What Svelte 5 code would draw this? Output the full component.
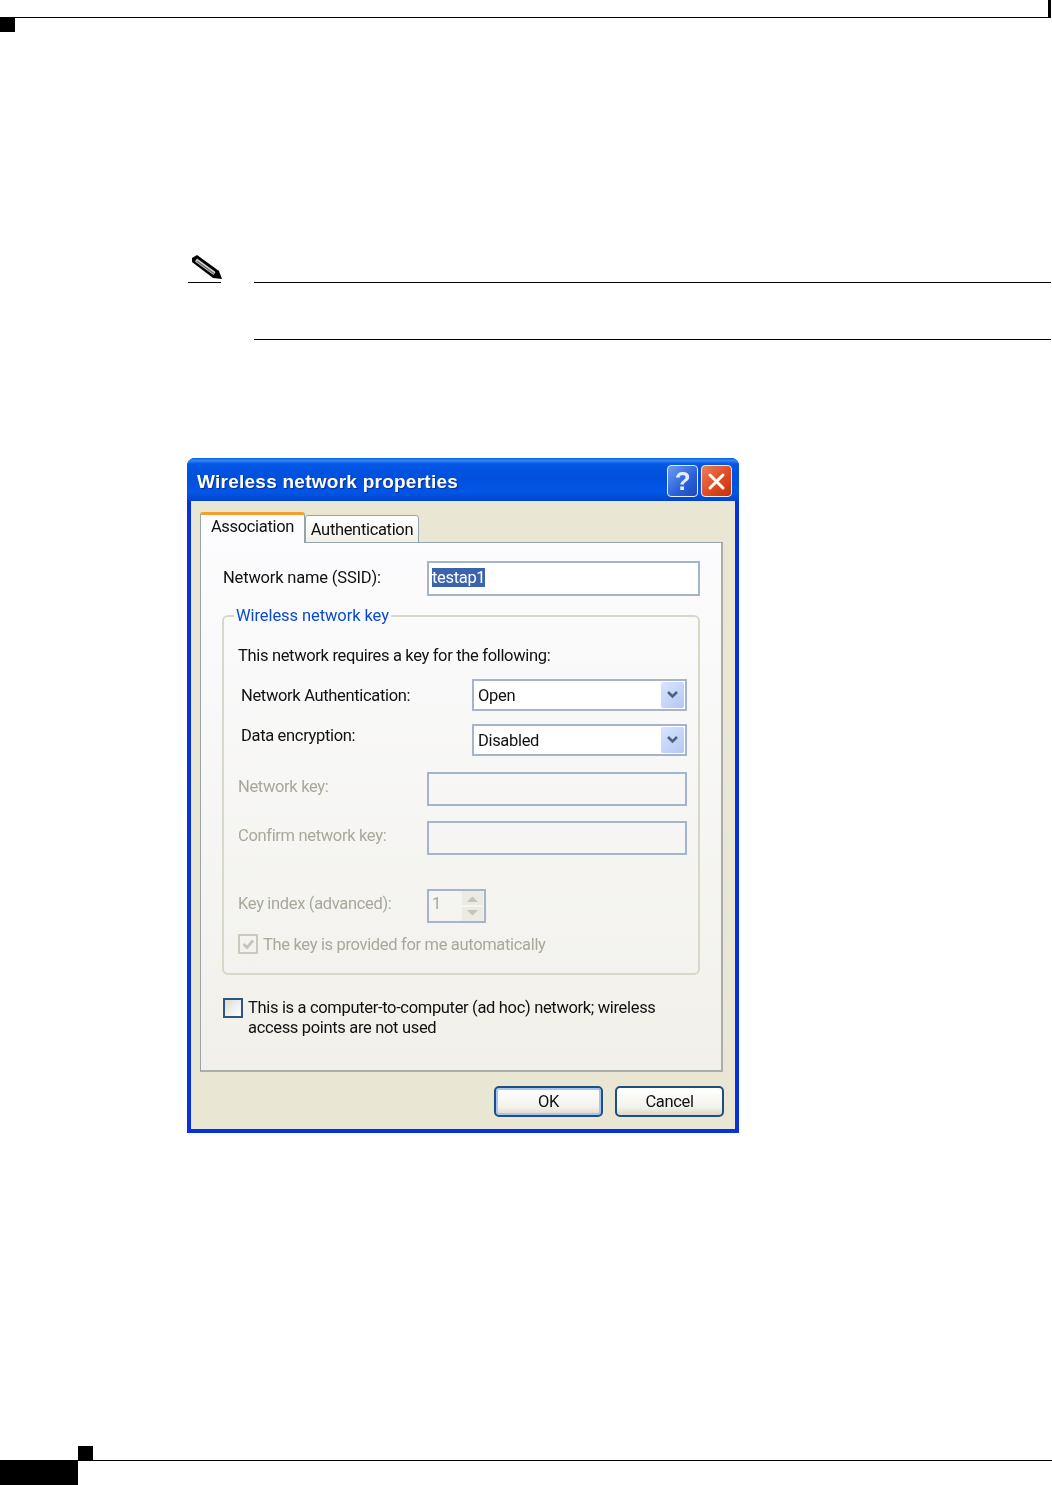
<script>
	let ssid = "testap1";
</script>

<div class="page">
	<header class="top">
		<div class="top-main">
			<div class="top-rule"></div>
			<div class="top-square"></div>
		</div>
		<div class="top-tick"></div>
	</header>

	<section class="note">
		<div class="note-icon">
			<svg width="36" height="27" viewBox="0 0 36 27">
				<path d="M4 3 L9 0 L31 16 L34 24 L25 23 L4 7 Z" fill="#000" />
				<path d="M9 3.5 L27.5 17 L25.5 20 L7 6.5 Z" fill="#d4d4d4" />
				<path d="M9 5.5 L26.5 18.3 L25.8 19.2 L8.3 6.4 Z" fill="#666" />
			</svg>
		</div>
		<div class="note-body"></div>
	</section>

	<div class="dialog">
		<div class="titlebar">
			<span class="title">Wireless network properties</span>
			<div class="title-buttons">
				<div class="tb-btn help">?</div>
				<div class="tb-btn close">
					<svg width="19" height="19" viewBox="0 0 19 19">
						<path d="M3 3 L16 16 M16 3 L3 16" stroke="#fff" stroke-width="3" stroke-linecap="round" />
					</svg>
				</div>
			</div>
		</div>

		<div class="client">
			<div class="tabs">
				<div class="tab active">Association</div>
				<div class="tab">Authentication</div>
			</div>

			<div class="panel">
				<div class="ssid-row">
					<label class="ssid-label" for="ssid">Network name (SSID):</label>
					<div class="input ssid-input" id="ssid"><span class="selected">{ssid}</span></div>
				</div>

				<fieldset class="group">
					<legend>Wireless network key</legend>
					<p class="intro">This network requires a key for the following:</p>

					<div class="select-row first">
						<span class="select-label">Network Authentication:</span>
						<div class="select">
							<span>Open</span>
							<div class="drop">
								<svg width="13" height="10" viewBox="0 0 13 10"><path d="M2 2 L6.5 6.5 L11 2" fill="none" stroke="#4d6185" stroke-width="2.6" /></svg>
							</div>
						</div>
					</div>
					<div class="select-row second">
						<span class="select-label up">Data encryption:</span>
						<div class="select">
							<span>Disabled</span>
							<div class="drop">
								<svg width="13" height="10" viewBox="0 0 13 10"><path d="M2 2 L6.5 6.5 L11 2" fill="none" stroke="#4d6185" stroke-width="2.6" /></svg>
							</div>
						</div>
					</div>

					<div class="key-row key1">
						<span class="off">Network key:</span>
						<div class="input off-input"></div>
					</div>
					<div class="key-row key2">
						<span class="off">Confirm network key:</span>
						<div class="input off-input"></div>
					</div>
					<div class="key-row key3">
						<span class="off">Key index (advanced):</span>
						<div class="input spin-input">
							<span class="off spin-value">1</span>
							<div class="spin">
								<svg width="21" height="30" viewBox="0 0 21 30">
									<rect x="0" y="0" width="21" height="30" fill="#ebebe3" />
									<path d="M0 15 H21" stroke="#f6f6ee" stroke-width="2" />
									<path d="M5 11 L10.5 5.5 L16 11 Z" fill="#c3c3b8" />
									<path d="M5 19 L10.5 24.5 L16 19 Z" fill="#c3c3b8" />
								</svg>
							</div>
						</div>
					</div>
					<div class="auto-row">
						<div class="check off-check">
							<svg width="16" height="16" viewBox="0 0 16 16"><path d="M3.5 8 L7 11.5 L13 4.5" fill="none" stroke="#c4c4b8" stroke-width="2.8" /></svg>
						</div>
						<span class="off">The key is provided for me automatically</span>
					</div>
				</fieldset>

				<div class="adhoc">
					<div class="check"></div>
					<span>This is a computer-to-computer (ad hoc) network; wireless<br />access points are not used</span>
				</div>
			</div>

			<div class="actions">
				<div class="btn default">OK</div>
				<div class="btn">Cancel</div>
			</div>
		</div>
	</div>

	<footer class="foot">
		<div class="foot-block"></div>
		<div class="foot-right">
			<div class="foot-square"></div>
			<div class="foot-rule"></div>
		</div>
	</footer>
</div>

<style>
	:global(body) {
		margin: 0;
		background: #fff;
	}

	.page {
		display: flex;
		flex-direction: column;
		height: 1485px;
		overflow: hidden;
		font-family: Roboto, "Liberation Sans", Arial, sans-serif;
		font-size: 16.5px;
		letter-spacing: -0.33px;
		color: #111;
	}

	/* page furniture */
	.top {
		display: flex;
		height: 32px;
	}
	.top-main {
		width: 1048px;
	}
	.top-rule {
		height: 17px;
		border-bottom: 1px solid #000;
	}
	.top-square {
		width: 15px;
		height: 14px;
		background: #000;
	}
	.top-tick {
		width: 3px;
		height: 18px;
		background: #000;
	}

	.note {
		display: flex;
		margin: 223px 1px 0 188px;
		gap: 33px;
	}
	.note-icon {
		width: 33px;
		height: 27px;
		border-bottom: 1px solid #000;
	}
	.note-icon svg {
		display: block;
		overflow: visible;
	}
	.note-body {
		flex: 1;
		height: 56px;
		margin-top: 27px;
		border-top: 1px solid #000;
		border-bottom: 1px solid #000;
	}

	/* window */
	.dialog {
		width: 552px;
		height: 675px;
		margin: 118px 0 0 187px;
		display: flex;
		flex-direction: column;
		border-radius: 8px 8px 0 0;
		overflow: hidden;
		background: #0831d9;
		filter: blur(0.4px);
	}
	.titlebar {
		height: 43px;
		flex: none;
		display: flex;
		align-items: flex-start;
		justify-content: space-between;
		padding: 0 7px 0 10px;
		background: linear-gradient(180deg, #0a5fe8 0%, #2f86f5 6%, #0456e4 14%, #0050dd 45%, #0255e6 80%, #0045c8 100%);
	}
	.title {
		margin-top: 13px;
		font-family: "Liberation Sans", sans-serif;
		font-weight: bold;
		font-size: 19px;
		letter-spacing: 0.25px;
		color: #fff;
		text-shadow: 1px 1px 1px #0a2f8f;
	}
	.title-buttons {
		display: flex;
		gap: 3px;
		margin-top: 7px;
	}
	.tb-btn {
		box-sizing: border-box;
		width: 31px;
		height: 32px;
		border: 1px solid #e8eefc;
		border-radius: 4px;
		display: flex;
		align-items: center;
		justify-content: center;
	}
	.help {
		background: linear-gradient(135deg, #6f9cf0, #2a5fd8 60%, #1f49bb);
		color: #e4ecfc;
		font-family: "Liberation Sans", sans-serif;
		font-size: 26px;
		font-weight: bold;
	}
	.close {
		background: linear-gradient(135deg, #e8805c, #e04a20 55%, #c3300c);
	}

	.client {
		flex: 1;
		margin: 0 4px 4px;
		padding: 11px 11px 0 9px;
		background: #e9e6d4;
		display: flex;
		flex-direction: column;
	}
	.tabs {
		display: flex;
		align-items: flex-end;
		height: 31px;
		margin-bottom: -1px;
		position: relative;
		z-index: 1;
	}
	.tab {
		height: 28px;
		width: 114px;
		box-sizing: border-box;
		display: flex;
		align-items: center;
		justify-content: center;
		background: linear-gradient(180deg, #fff, #f1f0e8);
		border: 1px solid #93a4ab;
		border-radius: 3px 3px 0 0;
	}
	.tab.active {
		width: 105px;
		height: 31px;
		padding-bottom: 6px;
		background: #fcfcfe;
		border-top: 3px solid #f5a02c;
		border-bottom: none;
	}

	.panel {
		width: 523px;
		height: 530px;
		box-sizing: border-box;
		padding: 18px 21px 0 22px;
		background: linear-gradient(180deg, #fcfcfe, #f1f0ea);
		border: 1px solid #93a4ab;
		border-right: 2px solid #a9aea8;
		border-bottom: 2px solid #a9aea8;
	}

	.ssid-row {
		display: flex;
		align-items: center;
		height: 35px;
	}
	.ssid-label {
		width: 204px;
		flex: none;
		margin-top: -2px;
		letter-spacing: -0.18px;
	}
	.input {
		box-sizing: border-box;
		border: 2px solid #a4b5cb;
		background: #fff;
	}
	.ssid-input {
		width: 273px;
		height: 35px;
		padding-left: 3px;
		display: flex;
		align-items: center;
		flex: none;
	}
	.selected {
		background: #3b64ad;
		color: #fff;
		line-height: 19px;
		margin-top: -3px;
	}

	.group {
		margin: 10px 0 0 -1px;
		padding: 0;
		width: 478px;
		height: 369px;
		box-sizing: border-box;
		border: 2px solid #d8d8c8;
		border-radius: 6px;
		min-width: 0;
	}
	.group legend {
		margin-left: 10px;
		padding: 0 2px;
		color: #0a4bd0;
		line-height: 20px;
		height: 20px;
		letter-spacing: -0.08px;
	}
	.intro {
		margin: 20px 0 0 14px;
		line-height: 20px;
	}

	.select-row {
		display: flex;
		align-items: center;
		padding-left: 17px;
	}
	.select-row.first {
		margin-top: 13px;
	}
	.select-row.second {
		margin-top: 13px;
	}
	.select-label {
		width: 231px;
		flex: none;
	}
	.select-label.up {
		margin-top: -10px;
	}
	.select {
		box-sizing: border-box;
		width: 215px;
		height: 32px;
		border: 2px solid #a4b5cb;
		background: #fff;
		display: flex;
		align-items: center;
		justify-content: space-between;
		padding-left: 4px;
	}
	.drop {
		width: 23px;
		height: 26px;
		margin-right: 1px;
		border-radius: 2px;
		background: linear-gradient(135deg, #d8e4fb, #b2c9f6);
		display: flex;
		align-items: center;
		justify-content: center;
	}

	.key-row {
		display: flex;
		align-items: center;
		padding-left: 14px;
	}
	.key-row > span {
		width: 189px;
		flex: none;
		margin-top: -5px;
	}
	.key1 {
		margin-top: 16px;
	}
	.key2 {
		margin-top: 15px;
	}
	.key3 {
		margin-top: 34px;
	}
	.off {
		color: #a8a89c;
	}
	.off-input {
		width: 260px;
		height: 34px;
		background: transparent;
	}
	.spin-input {
		width: 59px;
		height: 34px;
		background: transparent;
		display: flex;
		align-items: center;
		justify-content: space-between;
		padding-left: 3px;
	}
	.spin-value {
		margin-top: -5px;
	}
	.spin {
		height: 30px;
		margin-right: 1px;
	}
	.spin svg {
		display: block;
	}

	.auto-row {
		display: flex;
		align-items: center;
		gap: 5px;
		margin: 11px 0 0 14px;
	}
	.check {
		box-sizing: border-box;
		width: 20px;
		height: 20px;
		flex: none;
		border: 2px solid #2e5480;
		background: linear-gradient(135deg, #dcdcd5, #fff);
	}
	.off-check {
		border-color: #c9c9bc;
		background: transparent;
		display: flex;
		align-items: center;
		justify-content: center;
	}

	.adhoc {
		display: flex;
		gap: 5px;
		margin-top: 23px;
		line-height: 20px;
	}

	.actions {
		display: flex;
		justify-content: flex-end;
		gap: 12px;
		margin-top: 14px;
	}
	.btn {
		box-sizing: border-box;
		width: 109px;
		height: 31px;
		border: 2px solid #1f4f80;
		border-radius: 5px;
		background: linear-gradient(180deg, #fff, #f3f2ec 70%, #dcd8c8);
		display: flex;
		align-items: center;
		justify-content: center;
	}
	.btn.default {
		box-shadow: inset 0 0 0 2px #a9c4ee;
	}

	.foot {
		margin-top: auto;
		display: flex;
		align-items: flex-end;
		height: 39px;
	}
	.foot-block {
		width: 78px;
		height: 25px;
		background: #000;
	}
	.foot-right {
		flex: 1;
		height: 39px;
	}
	.foot-square {
		width: 15px;
		height: 14px;
		background: #000;
	}
	.foot-rule {
		height: 1px;
		background: #000;
	}
</style>
